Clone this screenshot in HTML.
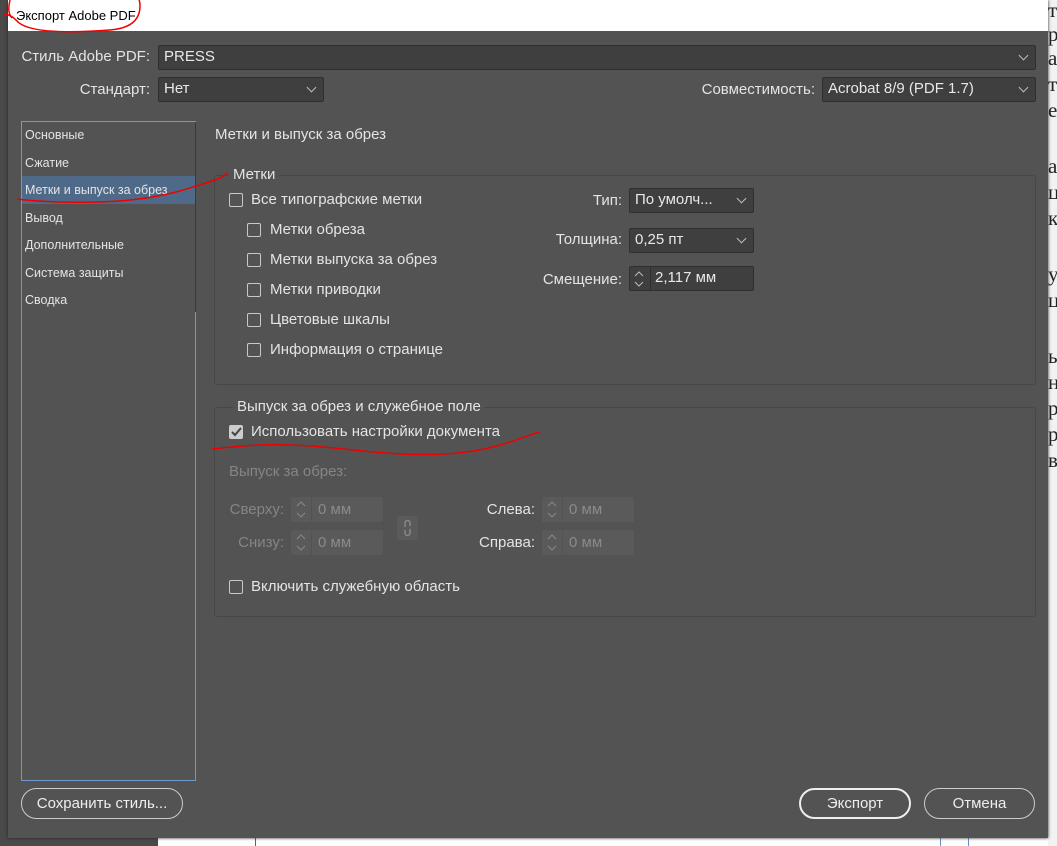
<!DOCTYPE html>
<html><head><meta charset="utf-8"><style>
*{box-sizing:border-box;margin:0;padding:0}
body{width:1057px;height:846px;position:relative;overflow:hidden;background:#fff;font-family:"Liberation Sans","DejaVu Sans",sans-serif;font-size:15px;color:#e4e4e4}
.a{position:absolute;white-space:nowrap}
.dlg{position:absolute;left:8px;top:0;width:1040px;height:838px;background:#535353;box-shadow:0 0 3px #222}
.tb{position:absolute;left:8px;top:0;width:1040px;height:31px;background:#fff;color:#000;font-size:13px}
.sel{position:absolute;background:#3f3f3f;border:1px solid #2f2f2f;border-radius:2px;color:#e8e8e8;padding-left:5px;line-height:22px}
.sel .ch{position:absolute;right:8px;width:7px;height:7px;border-right:1px solid #bbb;border-bottom:1px solid #bbb;transform:rotate(45deg);top:6px}
.cb{position:absolute;width:14px;height:14px;border:1px solid #c8c8c8;border-radius:2px}
.lbl{position:absolute;white-space:nowrap;text-align:right}
.grp{position:absolute;border:1px solid #474747;border-radius:3px}
.leg{position:absolute;background:#535353;padding:0 4px;white-space:nowrap}
.sp{position:absolute;background:#5a5a5a;border-radius:2px;height:25px;color:#8a8a8a;line-height:25px}
.ar{position:absolute;left:0;top:0;width:21px;height:100%;border-right:1px solid #535353}
.btn{position:absolute;border:1px solid #ccc;border-radius:16px;height:31px;line-height:29px;text-align:center;color:#eee}
.dim{color:#858585}
.lst{position:absolute;left:25px;font-size:12.5px}
.serif{position:absolute;font-family:"Liberation Serif",serif;font-size:21px;color:#222;left:1048px}
</style></head><body>
<div class="a" style="left:0;top:0;width:8px;height:846px;background:#4a4a4a"></div>
<div class="a" style="left:0;top:838px;width:158px;height:8px;background:#4a4a4a"></div>
<div class="a" style="left:255px;top:838px;width:1px;height:8px;background:#7a4aa0"></div>
<div class="a" style="left:940px;top:838px;width:1px;height:8px;background:#6a8ad0"></div>
<div class="a" style="left:968px;top:838px;width:1px;height:8px;background:#6a8ad0"></div>
<div class="a" style="left:1048px;top:0;width:9px;height:846px;background:#f2f2f2"></div>
<div class="serif" style="top:-2px">т</div><div class="serif" style="top:22px">р</div><div class="serif" style="top:46px">а</div><div class="serif" style="top:72px">т</div><div class="serif" style="top:98px">е</div><div class="serif" style="top:154px">а</div><div class="serif" style="top:180px">ц</div><div class="serif" style="top:206px">к</div><div class="serif" style="top:262px">у</div><div class="serif" style="top:288px">ц</div><div class="serif" style="top:344px">ы</div><div class="serif" style="top:370px">н</div><div class="serif" style="top:396px">р</div><div class="serif" style="top:422px">р</div><div class="serif" style="top:448px">в</div>
<div class="dlg"></div>
<div class="tb"><span class="a" style="left:8px;top:8px">Экспорт Adobe PDF</span></div>

<div class="lbl" style="right:907px;top:48px">Стиль Adobe PDF:</div>
<div class="sel" style="left:158px;top:45px;width:878px;height:25px">PRESS<span class="ch"></span></div>
<div class="lbl" style="right:907px;top:81px">Стандарт:</div>
<div class="sel" style="left:158px;top:77px;width:166px;height:25px">Нет<span class="ch"></span></div>
<div class="lbl" style="right:242px;top:81px">Совместимость:</div>
<div class="sel" style="left:822px;top:77px;width:214px;height:25px">Acrobat 8/9 (PDF 1.7)<span class="ch"></span></div>

<div class="a" style="left:21px;top:121px;width:175px;height:660px;border:1px solid #6f9ad0"></div>
<div class="a" style="left:195px;top:122px;width:1px;height:190px;background:#3a3a3a"></div>
<div class="a" style="left:22px;top:176px;width:173px;height:28px;background:#4f6a88"></div>
<div class="lst" style="top:128px">Основные</div>
<div class="lst" style="top:156px">Сжатие</div>
<div class="lst" style="top:183px">Метки и выпуск за обрез</div>
<div class="lst" style="top:211px">Вывод</div>
<div class="lst" style="top:238px">Дополнительные</div>
<div class="lst" style="top:266px">Система защиты</div>
<div class="lst" style="top:293px">Сводка</div>

<div class="a" style="left:215px;top:126px">Метки и выпуск за обрез</div>
<div class="grp" style="left:214px;top:175px;width:822px;height:210px"></div>
<div class="leg" style="left:229px;top:166px">Метки</div>
<div class="cb" style="left:229px;top:193px"></div><div class="a" style="left:251px;top:191px">Все типографские метки</div>
<div class="cb" style="left:247px;top:223px"></div><div class="a" style="left:270px;top:221px">Метки обреза</div>
<div class="cb" style="left:247px;top:253px"></div><div class="a" style="left:270px;top:251px">Метки выпуска за обрез</div>
<div class="cb" style="left:247px;top:283px"></div><div class="a" style="left:270px;top:281px">Метки приводки</div>
<div class="cb" style="left:247px;top:313px"></div><div class="a" style="left:270px;top:311px">Цветовые шкалы</div>
<div class="cb" style="left:247px;top:343px"></div><div class="a" style="left:270px;top:341px">Информация о странице</div>
<div class="lbl" style="right:435px;top:192px">Тип:</div>
<div class="sel" style="left:629px;top:188px;width:125px;height:25px">По умолч...<span class="ch"></span></div>
<div class="lbl" style="right:435px;top:231px">Толщина:</div>
<div class="sel" style="left:629px;top:228px;width:125px;height:25px">0,25 пт<span class="ch"></span></div>
<div class="lbl" style="right:435px;top:271px">Смещение:</div>
<div class="sel" style="left:629px;top:266px;width:125px;height:25px;padding-left:25px">2,117 мм<span class="ar" style="border-right-color:#2f2f2f"></span></div>

<div class="grp" style="left:214px;top:407px;width:822px;height:210px"></div>
<div class="leg" style="left:233px;top:398px">Выпуск за обрез и служебное поле</div>
<div class="cb" style="left:229px;top:425px;background:#ccc;border-color:#ccc"></div>
<div class="a" style="left:251px;top:423px">Использовать настройки документа</div>
<div class="a dim" style="left:229px;top:463px">Выпуск за обрез:</div>
<div class="lbl dim" style="right:773px;top:501px">Сверху:</div>
<div class="sp" style="left:291px;top:497px;width:92px;padding-left:27px"><span class="ar"></span>0 мм</div>
<div class="lbl dim" style="right:773px;top:534px">Снизу:</div>
<div class="sp" style="left:291px;top:530px;width:92px;padding-left:27px"><span class="ar"></span>0 мм</div>
<div class="a" style="left:397px;top:516px;width:21px;height:24px;background:#5a5a5a;border-radius:2px"></div>
<div class="lbl" style="right:522px;top:501px">Слева:</div>
<div class="sp" style="left:542px;top:497px;width:92px;padding-left:27px"><span class="ar"></span>0 мм</div>
<div class="lbl" style="right:522px;top:534px">Справа:</div>
<div class="sp" style="left:542px;top:530px;width:92px;padding-left:27px"><span class="ar"></span>0 мм</div>
<div class="cb" style="left:229px;top:580px"></div><div class="a" style="left:251px;top:578px">Включить служебную область</div>

<div class="btn" style="left:21px;top:788px;width:162px">Сохранить стиль...</div>
<div class="btn" style="left:799px;top:788px;width:112px;border:2px solid #eee;line-height:27px">Экспорт</div>
<div class="btn" style="left:924px;top:788px;width:111px">Отмена</div>

<svg class="a" style="left:0;top:0" width="1057" height="846">
<g fill="none" stroke-width="1">
<path d="M635,276 l4,-4 l4,4 M635,282 l4,4 l4,-4" stroke="#bbb"/>
<path d="M297,506 l4,-4 l4,4 M297,513 l4,4 l4,-4" stroke="#888"/>
<path d="M297,539 l4,-4 l4,4 M297,546 l4,4 l4,-4" stroke="#888"/>
<path d="M548,506 l4,-4 l4,4 M548,513 l4,4 l4,-4" stroke="#888"/>
<path d="M548,539 l4,-4 l4,4 M548,546 l4,4 l4,-4" stroke="#888"/>
<path d="M405,527 v-4 a2.5,2.5 0 0 1 5,0 v3 M410,529 v4 a2.5,2.5 0 0 1 -5,0 v-3" stroke="#888" stroke-width="1.5"/>
<path d="M232,432 l3,3 l6,-7" stroke="#444" stroke-width="2"/>
</g>
<g fill="none" stroke="#e00" stroke-width="1.5">
<path d="M3,14 C10,14 14,18 18,22 C30,33 70,33 110,30 C135,28 140,16 140,6 C140,2 139,0 139,0"/>
<path d="M10,0 C8,8 8,14 12,18"/>
<path d="M17,199 C40,202 90,204 130,200 C170,196 190,188 215,180 C222,178 226,174 228,172"/>
<path d="M212,449 C240,446 260,444 290,445 C330,446 360,452 400,454 C450,456 480,452 510,442 C525,437 535,433 540,432"/>
</g></svg>
</body></html>
